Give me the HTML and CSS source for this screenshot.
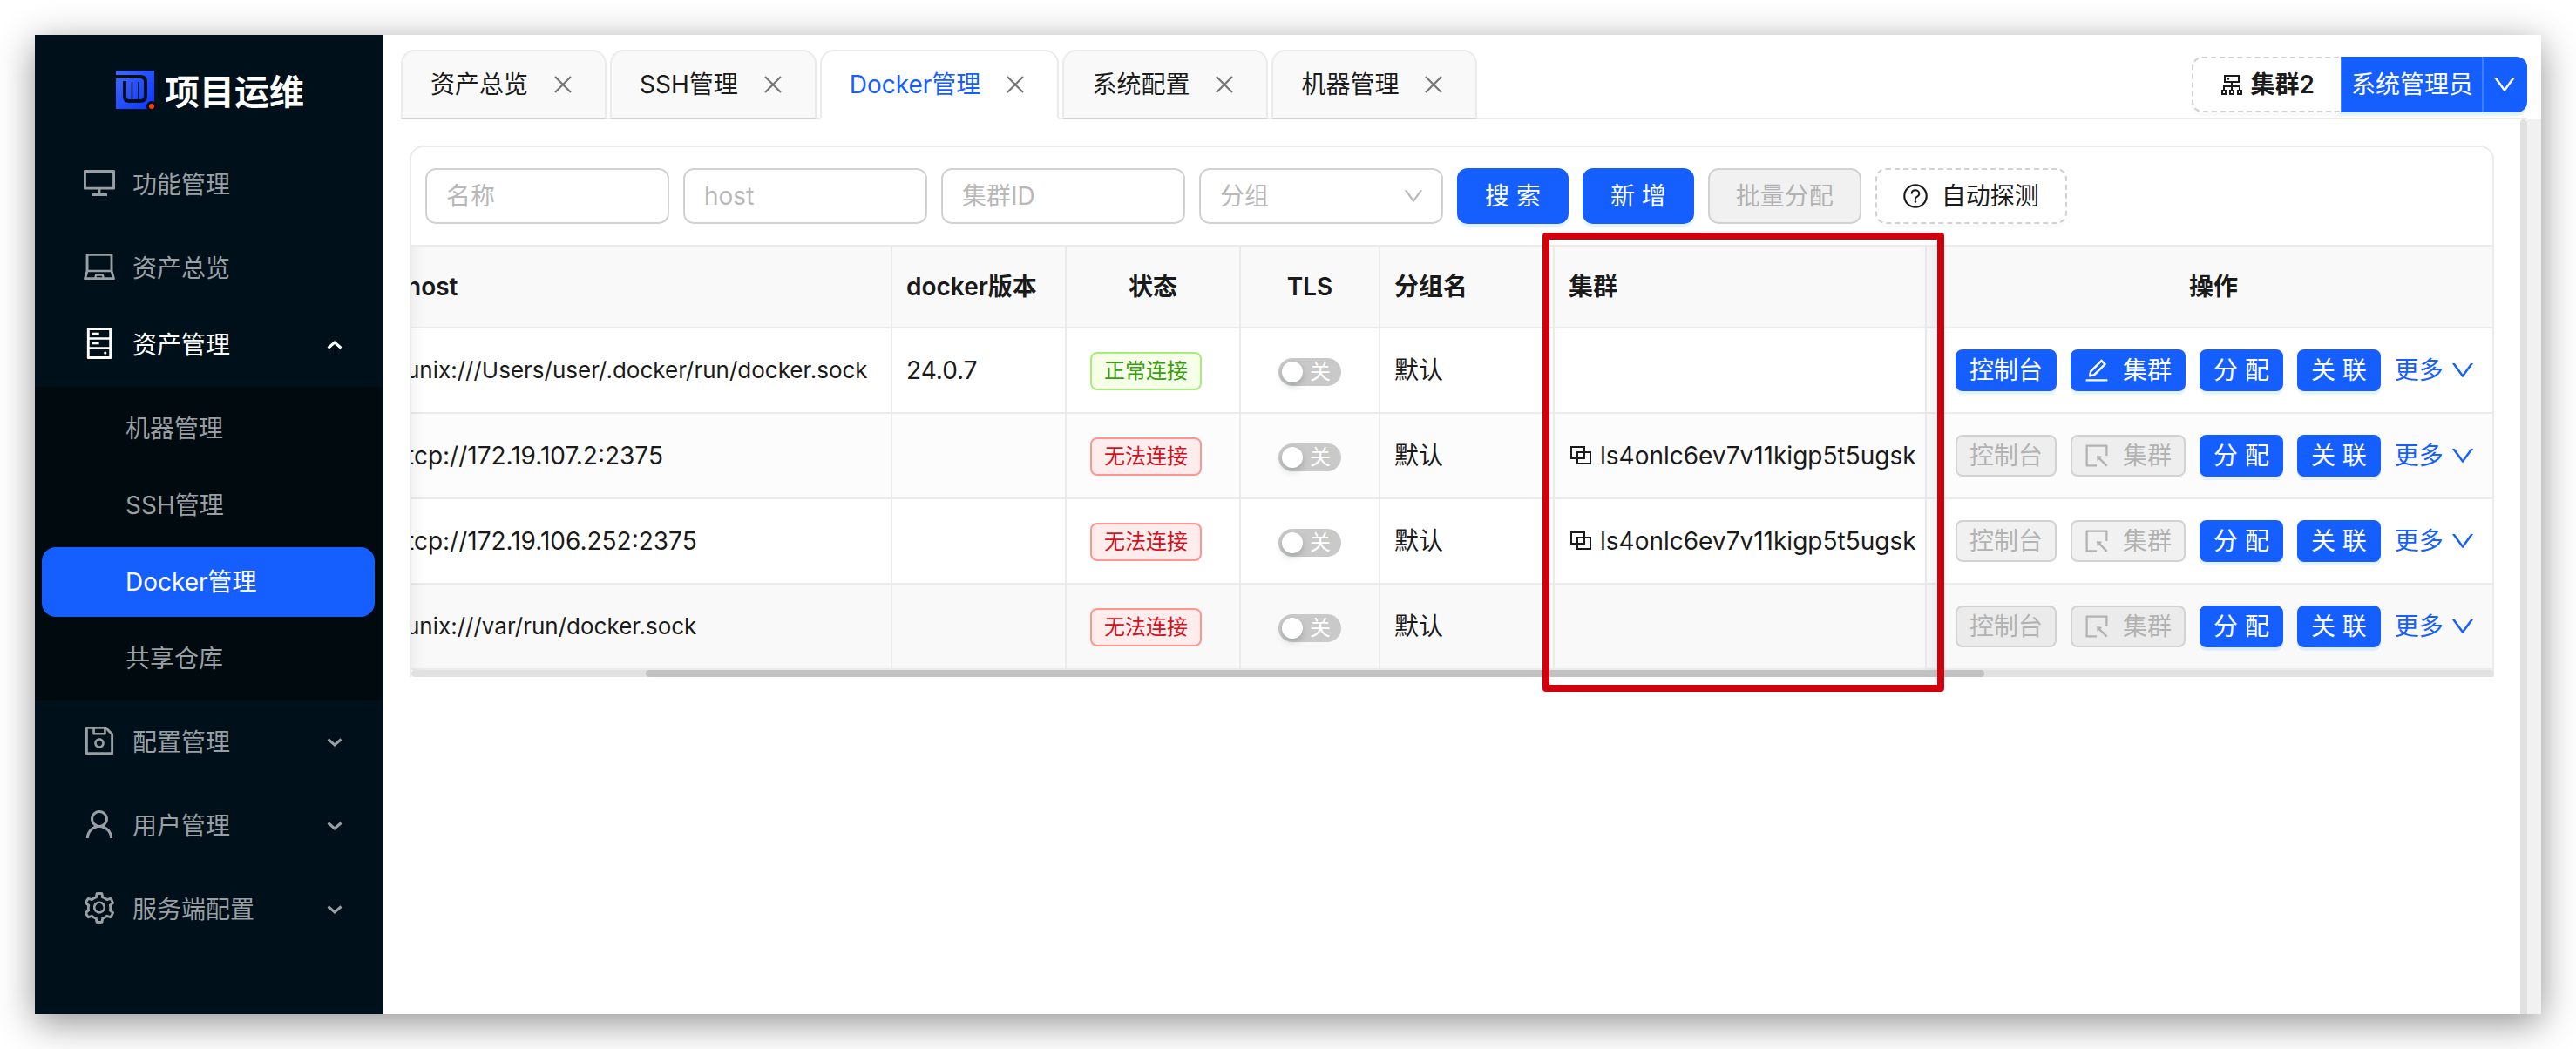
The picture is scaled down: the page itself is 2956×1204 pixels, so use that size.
FILE: index.html
```html
<!DOCTYPE html>
<html lang="zh-CN">
<head>
    <meta charset="UTF-8">
    <meta name="viewport" content="width=device-width, initial-scale=1.0">
    <title>项目运维 - Docker管理</title>
    <link rel="stylesheet" href="styles.css">
</head>
<body>
    <!-- 图标 -->
    <svg class="sprite" aria-hidden="true">
        <symbol id="i-desktop" viewBox="64 64 896 896"><path d="M928 140H96c-17.7 0-32 14.3-32 32v496c0 17.7 14.3 32 32 32h380v112H304c-8.8 0-16 7.2-16 16v48c0 4.4 3.6 8 8 8h432c4.4 0 8-3.6 8-8v-48c0-8.8-7.2-16-16-16H548V700h380c17.7 0 32-14.3 32-32V172c0-17.7-14.3-32-32-32zm-40 488H136V212h752v416z"/></symbol>
        <symbol id="i-laptop" viewBox="64 64 896 896"><path d="M956.9 845.1L896.4 632V168c0-17.7-14.3-32-32-32h-704c-17.7 0-32 14.3-32 32v464L67.9 845.1C60.4 866 75.8 888 98 888h828.8c22.2 0 37.6-22 30.1-42.9zM200.4 208h624v395h-624V208zm228.3 608l8.1-37h150.3l8.1 37H428.7zm224 0l-19.1-86.7c-.8-3.7-4.1-6.3-7.8-6.3H398.2c-3.8 0-7 2.6-7.8 6.3L371.3 816H151l42.3-149h638.2l42.3 149H652.7z"/></symbol>
        <symbol id="i-hdd" viewBox="64 64 896 896"><path d="M832 64H192c-17.7 0-32 14.3-32 32v832c0 17.7 14.3 32 32 32h640c17.7 0 32-14.3 32-32V96c0-17.7-14.3-32-32-32zm-600 72h560v208H232V136zm560 480H232V408h560v208zm0 272H232V680h560v208zM496 208H312c-4.4 0-8 3.6-8 8v48c0 4.4 3.6 8 8 8h184c4.4 0 8-3.6 8-8v-48c0-4.4-3.6-8-8-8zM312 544h184c4.4 0 8-3.6 8-8v-48c0-4.4-3.6-8-8-8H312c-4.4 0-8 3.6-8 8v48c0 4.4 3.6 8 8 8zm328 244a40 40 0 1080 0 40 40 0 10-80 0z"/></symbol>
        <symbol id="i-save" viewBox="64 64 896 896"><path d="M893.3 293.3L730.7 130.7c-7.5-7.5-16.7-13-26.7-16V112H144c-17.7 0-32 14.3-32 32v736c0 17.7 14.3 32 32 32h736c17.7 0 32-14.3 32-32V338.5c0-17-6.7-33.2-18.7-45.2zM384 184h256v104H384V184zm456 656H184V184h136v136c0 17.7 14.3 32 32 32h320c17.7 0 32-14.3 32-32V205.8l136 136V840zM512 442c-79.5 0-144 64.5-144 144s64.5 144 144 144 144-64.5 144-144-64.5-144-144-144zm0 224c-44.2 0-80-35.8-80-80s35.8-80 80-80 80 35.8 80 80-35.8 80-80 80z"/></symbol>
        <symbol id="i-user" viewBox="64 64 896 896"><path d="M858.5 763.6a374 374 0 00-80.6-119.5 375.63 375.63 0 00-119.5-80.6c-.4-.2-.8-.3-1.2-.5C719.5 518 760 444.7 760 362c0-137-111-248-248-248S264 225 264 362c0 82.7 40.5 156 102.8 201.1-.4.2-.8.3-1.2.5-44.8 18.9-85 46-119.5 80.6a375.63 375.63 0 00-80.6 119.5A371.7 371.7 0 00136 901.8a8 8 0 008 8.2h60c4.4 0 7.9-3.5 8-7.8 2-77.2 33-149.5 87.8-204.3 56.7-56.7 132-87.9 212.2-87.9s155.5 31.2 212.2 87.9C779 752.7 810 825 812 902.2c.1 4.4 3.6 7.8 8 7.8h60a8 8 0 008-8.2c-1-47.8-10.9-94.3-29.5-138.2zM512 534c-45.9 0-89.1-17.9-121.6-50.4S340 407.9 340 362c0-45.9 17.9-89.1 50.4-121.6S466.1 190 512 190s89.1 17.9 121.6 50.4S684 316.1 684 362c0 45.9-17.9 89.1-50.4 121.6S557.9 534 512 534z"/></symbol>
        <symbol id="i-setting" viewBox="64 64 896 896"><path d="M924.8 625.7l-65.5-56c3.1-19 4.7-38.4 4.7-57.8s-1.6-38.8-4.7-57.8l65.5-56a32.03 32.03 0 009.3-35.2l-.9-2.6a443.74 443.74 0 00-79.7-137.9l-1.8-2.1a32.12 32.12 0 00-35.1-9.5l-81.3 28.9c-30-24.6-63.5-44-99.7-57.6l-15.7-85a32.05 32.05 0 00-25.8-25.7l-2.7-.5c-52.1-9.4-106.9-9.4-159 0l-2.7.5a32.05 32.05 0 00-25.8 25.7l-15.8 85.4a351.86 351.86 0 00-99 57.4l-81.9-29.1a32 32 0 00-35.1 9.5l-1.8 2.1a446.02 446.02 0 00-79.7 137.9l-.9 2.6c-4.5 12.5-.8 26.5 9.3 35.2l66.3 56.6c-3.1 18.8-4.6 38-4.6 57.1 0 19.2 1.5 38.4 4.6 57.1L99 625.5a32.03 32.03 0 00-9.3 35.2l.9 2.6c18.1 50.4 44.9 96.9 79.7 137.9l1.8 2.1a32.12 32.12 0 0035.1 9.5l81.9-29.1c29.8 24.5 63.1 43.9 99 57.4l15.8 85.4a32.05 32.05 0 0025.8 25.7l2.7.5a449.4 449.4 0 00159 0l2.7-.5a32.05 32.05 0 0025.8-25.7l15.7-85a350 350 0 0099.7-57.6l81.3 28.9a32 32 0 0035.1-9.5l1.8-2.1c34.8-41.1 61.6-87.5 79.7-137.9l.9-2.6c4.5-12.3.8-26.3-9.3-35zM788.3 465.9c2.5 15.1 3.8 30.6 3.8 46.1s-1.3 31-3.8 46.1l-6.6 40.1 74.7 63.9a370.03 370.03 0 01-42.6 73.6L721 702.8l-31.4 25.8c-23.9 19.6-50.5 35-79.3 45.8l-38.1 14.3-17.9 97a377.5 377.5 0 01-85 0l-17.9-97.2-37.8-14.5c-28.5-10.8-55-26.2-78.7-45.7l-31.4-25.9-93.4 33.2c-17-22.9-31.2-47.6-42.6-73.6l75.5-64.5-6.5-40c-2.4-14.9-3.7-30.3-3.7-45.5 0-15.3 1.2-30.6 3.7-45.5l6.5-40-75.5-64.5c11.3-26.1 25.6-50.7 42.6-73.6l93.4 33.2 31.4-25.9c23.7-19.5 50.2-34.9 78.7-45.7l37.9-14.3 17.9-97.2c28.1-3.2 56.8-3.2 85 0l17.9 97 38.1 14.3c28.7 10.8 55.4 26.2 79.3 45.8l31.4 25.8 92.8-32.9c17 22.9 31.2 47.6 42.6 73.6L781.8 426l6.5 39.9zM512 326c-97.2 0-176 78.8-176 176s78.8 176 176 176 176-78.8 176-176-78.8-176-176-176zm79.2 255.2A111.6 111.6 0 01512 614c-29.9 0-58-11.7-79.2-32.8A111.6 111.6 0 01400 502c0-29.9 11.7-58 32.8-79.2C454 401.6 482.1 390 512 390c29.9 0 58 11.6 79.2 32.8A111.6 111.6 0 01624 502c0 29.9-11.7 58-32.8 79.2z"/></symbol>
        <symbol id="i-down" viewBox="64 64 896 896"><path d="M884 256h-75c-5.1 0-9.9 2.5-12.9 6.6L512 654.2 227.9 262.6c-3-4.1-7.8-6.6-12.9-6.6h-75c-6.5 0-10.3 7.4-6.5 12.7l352.6 486.1c12.8 17.6 39 17.6 51.7 0l352.6-486.1c3.9-5.3.1-12.7-6.4-12.7z"/></symbol>
        <symbol id="i-edit" viewBox="64 64 896 896"><path d="M257.7 752c2 0 4-.2 6-.5L431.9 722c2-.4 3.9-1.3 5.3-2.8l423.9-423.9a9.96 9.96 0 000-14.1L694.9 114.9c-1.9-1.9-4.4-2.9-7.1-2.9s-5.2 1-7.1 2.9L256.8 538.8c-1.5 1.5-2.4 3.3-2.8 5.3l-29.5 168.2a33.5 33.5 0 009.4 29.8c6.6 6.4 14.9 9.9 23.8 9.9zm67.4-174.4L687.8 215l73.3 73.3-362.7 362.6-88.9 15.7 15.6-89zM880 836H144c-17.7 0-32 14.3-32 32v36c0 4.4 3.6 8 8 8h784c4.4 0 8-3.6 8-8v-36c0-17.7-14.3-32-32-32z"/></symbol>
        <symbol id="i-select" viewBox="64 64 896 896"><path d="M880 112H144c-17.7 0-32 14.3-32 32v736c0 17.7 14.3 32 32 32h360c4.4 0 8-3.6 8-8v-56c0-4.4-3.6-8-8-8H184V184h656v320c0 4.4 3.6 8 8 8h56c4.4 0 8-3.6 8-8V144c0-17.7-14.3-32-32-32zM653.3 599.4l52.2-52.2a8.01 8.01 0 00-4.7-13.6l-179.4-21c-5.1-.6-9.5 3.7-8.9 8.9l21 179.4c.8 6.6 8.9 9.4 13.6 4.7l52.4-52.4 256.2 256.2c3.1 3.1 8.2 3.1 11.3 0l42.4-42.4c3.1-3.1 3.1-8.2 0-11.3L653.3 599.4z"/></symbol>
        <symbol id="i-chevron" viewBox="0 0 20 20"><path d="M2.500 6.500l7.500 6.500 7.500-6.500" fill="none" stroke="currentColor" stroke-width="3"/></symbol>
        <symbol id="i-close" viewBox="0 0 24 24"><path d="M3 3l18 18M21 3l-18 18" fill="none" stroke="currentColor" stroke-width="2.200"/></symbol>
        <symbol id="i-block" viewBox="0 0 28 28"><path d="M3 4h15v13H3zM10 10h15v13H10z" fill="none" stroke="currentColor" stroke-width="2"/></symbol>
        <symbol id="i-cluster" viewBox="0 0 28 28"><path d="M6 4h16v7H6zM14 11v10M5 21v-5h18v5M3 21h4v4H3zM12 21h4v4h-4zM21 21h4v4h-4z" fill="none" stroke="currentColor" stroke-width="2"/><circle cx="10" cy="7.500" r="1.200"/></symbol>
        <symbol id="i-question" viewBox="0 0 28 28"><circle cx="14" cy="14" r="12.700" fill="none" stroke="currentColor" stroke-width="2.200"/><path d="M9.700 11.500c0-2.600 1.900-4.200 4.300-4.200s4.300 1.600 4.300 3.900c0 1.900-1.200 2.900-2.600 3.600-1 .5-1.700 1.100-1.700 2.200v.8" fill="none" stroke="currentColor" stroke-width="2"/><circle cx="14" cy="20.500" r="1.300"/></symbol>
    </svg>

    <div class="app">
        <nav class="sidebar">
            <div class="logo">
                <svg class="logo-img" viewBox="0 0 44 44" aria-hidden="true">
                    <defs>
                        <linearGradient id="logo-bg" x1="0" y1="0" x2="1" y2="1">
                            <stop offset="0" stop-color="#3f68ff"/>
                            <stop offset="1" stop-color="#0a35ff"/>
                        </linearGradient>
                    </defs>
                    <path d="M0 0h44v44H0z" fill="url(#logo-bg)"/>
                    <path d="M0 7h28q6 0 6 6v16q0 6-6 6H15q-5 0-5-6V12" fill="none" stroke="#00101a" stroke-width="4"/>
                    <path d="M18.500 13v21M26 13v21" fill="none" stroke="#00101a" stroke-width="1.500"/>
                    <circle cx="41" cy="41" r="6" fill="#00101a"/>
                    <circle cx="41" cy="41" r="3" fill="#ff3b0a"/>
                </svg>
                <span class="logo-text">项目运维</span>
            </div>
            <ul class="menu">
                <li><a href="#"><svg class="menu-icon"><use href="#i-desktop"/></svg>功能管理</a></li>
                <li><a href="#"><svg class="menu-icon"><use href="#i-laptop"/></svg>资产总览</a></li>
                <li class="open">
                    <a href="#"><svg class="menu-icon"><use href="#i-hdd"/></svg>资产管理<svg class="arrow"><use href="#i-chevron"/></svg></a>
                    <ul class="submenu">
                        <li><a href="#">机器管理</a></li>
                        <li><a href="#">SSH管理</a></li>
                        <li><a href="#" class="selected">Docker管理</a></li>
                        <li><a href="#">共享仓库</a></li>
                    </ul>
                </li>
                <li><a href="#"><svg class="menu-icon"><use href="#i-save"/></svg>配置管理<svg class="arrow"><use href="#i-chevron"/></svg></a></li>
                <li><a href="#"><svg class="menu-icon"><use href="#i-user"/></svg>用户管理<svg class="arrow"><use href="#i-chevron"/></svg></a></li>
                <li><a href="#"><svg class="menu-icon"><use href="#i-setting"/></svg>服务端配置<svg class="arrow"><use href="#i-chevron"/></svg></a></li>
            </ul>
        </nav>

        <div class="main">
            <header class="header">
                <div class="tabs">
                    <div class="tab"><a href="#">资产总览</a><button type="button" aria-label="关闭"><svg><use href="#i-close"/></svg></button></div>
                    <div class="tab"><a href="#">SSH管理</a><button type="button" aria-label="关闭"><svg><use href="#i-close"/></svg></button></div>
                    <div class="tab active"><a href="#">Docker管理</a><button type="button" aria-label="关闭"><svg><use href="#i-close"/></svg></button></div>
                    <div class="tab"><a href="#">系统配置</a><button type="button" aria-label="关闭"><svg><use href="#i-close"/></svg></button></div>
                    <div class="tab"><a href="#">机器管理</a><button type="button" aria-label="关闭"><svg><use href="#i-close"/></svg></button></div>
                </div>
                <div class="user-group">
                    <button type="button" class="btn dashed cluster-btn"><svg class="icon"><use href="#i-cluster"/></svg>集群2</button>
                    <button type="button" class="btn primary user-btn">系统管理员</button>
                    <button type="button" class="btn primary more-btn" aria-label="展开"><svg class="icon"><use href="#i-down"/></svg></button>
                </div>
            </header>

            <div class="body">
                <div class="content">
                    <div class="card">
                        <form class="toolbar">
                            <input class="field" type="text" placeholder="名称" aria-label="名称">
                            <input class="field" type="text" placeholder="host" aria-label="host">
                            <input class="field" type="text" placeholder="集群ID" aria-label="集群ID">
                            <div class="select-box">
                                <select class="field" aria-label="分组">
                                    <option>分组</option>
                                </select>
                                <svg class="select-arrow"><use href="#i-down"/></svg>
                            </div>
                            <button type="button" class="btn primary">搜 索</button>
                            <button type="button" class="btn primary">新 增</button>
                            <button type="button" class="btn" disabled>批量分配</button>
                            <button type="button" class="btn dashed"><svg class="icon"><use href="#i-question"/></svg>自动探测</button>
                        </form>

                        <div class="table-wrap">
                            <table>
                                <colgroup>
                                    <col>
                                    <col class="w200">
                                    <col class="w200">
                                    <col class="w160">
                                    <col class="w200">
                                    <col class="col-cluster">
                                    <col class="col-rest">
                                    <col class="col-action">
                                </colgroup>
                                <thead>
                                    <tr>
                                        <th>host</th>
                                        <th>docker版本</th>
                                        <th class="center">状态</th>
                                        <th class="center">TLS</th>
                                        <th>分组名</th>
                                        <th>集群</th>
                                        <th class="rest"></th>
                                        <th class="fixed">操作</th>
                                    </tr>
                                </thead>
                                <tbody>
                                    <tr>
                                        <td class="sock">unix:///Users/user/.docker/run/docker.sock</td>
                                        <td>24.0.7</td>
                                        <td class="center"><span class="tag green">正常连接</span></td>
                                        <td class="center"><label class="switch"><input type="checkbox" disabled>关</label></td>
                                        <td>默认</td>
                                        <td></td>
                                        <td class="rest"></td>
                                        <td class="fixed">
                                            <div class="actions">
                                                <button type="button" class="btn small primary">控制台</button>
                                                <button type="button" class="btn small primary"><svg class="icon"><use href="#i-edit"/></svg>集群</button>
                                                <button type="button" class="btn small primary">分 配</button>
                                                <button type="button" class="btn small primary">关 联</button>
                                                <a href="#" class="more">更多<svg class="icon"><use href="#i-down"/></svg></a>
                                            </div>
                                        </td>
                                    </tr>
                                    <tr>
                                        <td>tcp://172.19.107.2:2375</td>
                                        <td></td>
                                        <td class="center"><span class="tag red">无法连接</span></td>
                                        <td class="center"><label class="switch"><input type="checkbox" disabled>关</label></td>
                                        <td>默认</td>
                                        <td><span class="cluster-id"><svg class="icon"><use href="#i-block"/></svg>ls4onlc6ev7v11kigp5t5ugsk</span></td>
                                        <td class="rest"></td>
                                        <td class="fixed">
                                            <div class="actions">
                                                <button type="button" class="btn small" disabled>控制台</button>
                                                <button type="button" class="btn small" disabled><svg class="icon"><use href="#i-select"/></svg>集群</button>
                                                <button type="button" class="btn small primary">分 配</button>
                                                <button type="button" class="btn small primary">关 联</button>
                                                <a href="#" class="more">更多<svg class="icon"><use href="#i-down"/></svg></a>
                                            </div>
                                        </td>
                                    </tr>
                                    <tr>
                                        <td>tcp://172.19.106.252:2375</td>
                                        <td></td>
                                        <td class="center"><span class="tag red">无法连接</span></td>
                                        <td class="center"><label class="switch"><input type="checkbox" disabled>关</label></td>
                                        <td>默认</td>
                                        <td><span class="cluster-id"><svg class="icon"><use href="#i-block"/></svg>ls4onlc6ev7v11kigp5t5ugsk</span></td>
                                        <td class="rest"></td>
                                        <td class="fixed">
                                            <div class="actions">
                                                <button type="button" class="btn small" disabled>控制台</button>
                                                <button type="button" class="btn small" disabled><svg class="icon"><use href="#i-select"/></svg>集群</button>
                                                <button type="button" class="btn small primary">分 配</button>
                                                <button type="button" class="btn small primary">关 联</button>
                                                <a href="#" class="more">更多<svg class="icon"><use href="#i-down"/></svg></a>
                                            </div>
                                        </td>
                                    </tr>
                                    <tr class="hover">
                                        <td class="sock">unix:///var/run/docker.sock</td>
                                        <td></td>
                                        <td class="center"><span class="tag red">无法连接</span></td>
                                        <td class="center"><label class="switch"><input type="checkbox" disabled>关</label></td>
                                        <td>默认</td>
                                        <td></td>
                                        <td class="rest"></td>
                                        <td class="fixed">
                                            <div class="actions">
                                                <button type="button" class="btn small" disabled>控制台</button>
                                                <button type="button" class="btn small" disabled><svg class="icon"><use href="#i-select"/></svg>集群</button>
                                                <button type="button" class="btn small primary">分 配</button>
                                                <button type="button" class="btn small primary">关 联</button>
                                                <a href="#" class="more">更多<svg class="icon"><use href="#i-down"/></svg></a>
                                            </div>
                                        </td>
                                    </tr>
                                </tbody>
                            </table>
                        </div>
                        <div class="scroll-x"><div class="thumb"></div></div>
                        <div class="mark"></div>
                    </div>
                </div>
                <div class="scroll-y"></div>
                <div class="gutter"></div>
            </div>
        </div>
    </div>
</body>
</html>
```

FILE: styles.css
```css
*{
    box-sizing: border-box;
}
body{
    margin: 0;
    padding: 40px;
    min-height: 100vh;
    display: flex;
    background: #fff;
    color: #1a1a1a;
    font-family: Inter, "Noto Sans CJK SC", sans-serif;
    font-size: 28px;
    line-height: 44px;
}
ul{
    margin: 0;
    padding: 0;
    list-style: none;
}
a{
    color: inherit;
    text-decoration: none;
}
button, input, select{
    font: inherit;
    color: inherit;
}
svg{
    fill: currentColor;
    flex: none;
}
.sprite{
    display: none;
}
.icon{
    width: 28px;
    height: 28px;
}
.app{
    flex: 1;
    min-width: 0;
    display: flex;
    background: #fff;
    box-shadow: 0 10px 40px rgba(0, 0, 0, 0.43);
}

/*左侧菜单*/
.sidebar{
    flex: none;
    width: 400px;
    background: #00101a;
    border-right: 2px solid #00101a;
    color: #999fa3;
}
.logo{
    display: flex;
    align-items: center;
    justify-content: center;
    gap: 12px;
    height: 126px;
    padding-left: 4px;
}
.logo-img{
    width: 44px;
    height: 44px;
}
.logo-text{
    padding-top: 6px;
    color: #fff;
    font-size: 40px;
    font-weight: 600;
}
.menu a{
    display: flex;
    align-items: center;
    height: 80px;
    margin: 8px;
    padding: 0 36px 0 48px;
    border-radius: 16px;
}
.menu > li > a{
    margin: 0 8px 16px;
}
.menu > li:first-child{
    padding-top: 6px;
}
.menu > .open > a{
    margin: -8px 8px 8px;
}
.menu-icon{
    width: 36px;
    height: 36px;
    margin: 0 20px 4px 0;
}
.arrow{
    width: 20px;
    height: 20px;
    margin-left: auto;
}
.open > a{
    color: #fff;
}
.open .arrow{
    transform: rotate(180deg);
}
.submenu{
    padding: 8px 0;
    margin-bottom: 8px;
    background: #000a0f;
}
.submenu a{
    margin: 0 8px 8px;
    padding-left: 96px;
}
.submenu li:last-child a{
    margin-bottom: 0;
}
.submenu .selected{
    background: #155eff;
    color: #fff;
}

/*顶部标签页*/
.main{
    flex: 1;
    min-width: 0;
    display: flex;
    flex-direction: column;
}
.header{
    display: flex;
    justify-content: space-between;
    align-items: flex-end;
    margin: 0 16px 0 20px;
    padding-top: 17px;
    box-shadow: inset 0 -2px #ebebeb;
}
.tabs{
    display: flex;
    gap: 4px;
}
.tab{
    display: flex;
    align-items: center;
    height: 80px;
    padding: 0 36px 0 32px;
    border: 2px solid #ebebeb;
    border-bottom-color: #d2d2d2;
    border-radius: 16px 16px 0 0;
    background: #f9f9f9;
}
.tab.active{
    background: #fff;
    border-bottom-color: #fff;
}
.tab.active a{
    color: #155eff;
}
.tab button{
    display: flex;
    margin-left: 28px;
    padding: 0;
    border: 0;
    background: none;
    color: #757575;
    cursor: pointer;
}
.tab svg{
    width: 24px;
    height: 24px;
}
.user-group{
    display: flex;
    margin-bottom: 8px;
}

/*按钮*/
.btn{
    display: flex;
    align-items: center;
    justify-content: center;
    gap: 16px;
    height: 64px;
    padding: 0 30px;
    border: 2px solid #d2d2d2;
    border-radius: 12px;
    background: #fff;
    white-space: nowrap;
    cursor: pointer;
}
.btn.small{
    height: 48px;
    padding: 0 14px;
    border-radius: 8px;
}
.btn.primary{
    border-color: #155eff;
    background: #155eff;
    color: #fff;
    box-shadow: 0 4px 0 rgba(5, 145, 255, 0.1);
}
.btn.dashed{
    border-style: dashed;
    box-shadow: 0 4px 0 rgba(0, 0, 0, 0.02);
}
.btn:disabled{
    background: rgba(0, 0, 0, 0.055);
    color: #b2b2b2;
    cursor: not-allowed;
}
.user-group .cluster-btn{
    gap: 8px;
    border-right: 0;
    border-radius: 12px 0 0 12px;
    font-weight: 600;
}
.user-group .user-btn{
    padding: 0 10px;
    border-left-color: #3f7fff;
    border-right: 0;
    border-radius: 0;
}
.user-group .more-btn{
    padding: 0 10px;
    border-left-color: #3f7fff;
    border-radius: 0 12px 12px 0;
}

/*内容区*/
.body{
    flex: 1;
    display: flex;
}
.content{
    flex: 1;
    min-width: 0;
    padding: 30px;
}
.scroll-y{
    width: 8px;
    border-radius: 4px 4px 0 0;
    background: #e1e1e1;
}
.gutter{
    width: 16px;
    background: #f1f1f1;
}
.card{
    position: relative;
    border: 2px solid #ebebeb;
    border-bottom: 0;
    border-radius: 16px 16px 0 0;
}
.toolbar{
    display: flex;
    gap: 16px;
    padding: 24px 16px;
    border-bottom: 2px solid #ebebeb;
}
.field{
    width: 280px;
    height: 64px;
    padding: 0 22px;
    border: 2px solid #d2d2d2;
    border-radius: 12px;
    background: #fff;
    outline: none;
}
.field::placeholder{
    color: #b8b8b8;
    opacity: 1;
}
.select-box{
    position: relative;
}
.select-box .field{
    display: block;
    appearance: none;
    color: #b8b8b8;
}
.select-arrow{
    position: absolute;
    top: 20px;
    right: 22px;
    width: 24px;
    height: 24px;
    color: #b8b8b8;
    pointer-events: none;
}

/*表格，横向滚动后左侧被遮住一部分*/
.table-wrap{
    position: relative;
    display: flex;
    justify-content: flex-end;
    overflow: hidden;
}
.table-wrap::before{
    content: "";
    position: absolute;
    top: 0;
    bottom: 0;
    left: 0;
    width: 60px;
    box-shadow: inset 20px 0 16px -16px rgba(5, 5, 5, 0.06);
    pointer-events: none;
}
table{
    flex: none;
    width: calc(100% + 22px);
    table-layout: fixed;
    border-collapse: separate;
    border-spacing: 0;
}
.w200{
    width: 200px;
}
.w160{
    width: 160px;
}
.col-cluster{
    width: 427px;
}
.col-rest{
    width: 9px;
}
.col-action{
    width: 640px;
}
th, td{
    height: 98px;
    padding: 0 16px;
    border-right: 2px solid #ebebeb;
    border-bottom: 2px solid #ebebeb;
    text-align: left;
    white-space: nowrap;
}
th{
    height: 94px;
    background: #f9f9f9;
    font-weight: 600;
}
tbody tr:nth-child(even){
    background: #fcfcfc;
}
tbody tr.hover{
    background: #f9f9f9;
}
.center{
    text-align: center;
}
.sock{
    font-size: 26px;
}
.rest{
    padding: 0;
    border-right: 0;
}
.fixed{
    position: relative;
    border-right: 0;
    text-align: center;
}
.fixed::before{
    content: "";
    position: absolute;
    top: 0;
    bottom: -2px;
    left: -60px;
    width: 60px;
    box-shadow: inset -20px 0 16px -16px rgba(5, 5, 5, 0.06);
    pointer-events: none;
}
.tag{
    display: inline-block;
    margin-right: 16px;
    padding: 0 14px;
    border: 2px solid;
    border-radius: 8px;
    font-size: 24px;
    line-height: 40px;
    vertical-align: middle;
}
.tag.green{
    color: #389e0d;
    background: #f6ffe8;
    border-color: #a8ec7c;
}
.tag.red{
    color: #cf1322;
    background: #ffeded;
    border-color: #ff9490;
}
.switch{
    display: inline-flex;
    align-items: center;
    gap: 8px;
    width: 72px;
    height: 32px;
    padding: 0 4px;
    border-radius: 16px;
    background: #c9c9c9;
    color: #fff;
    font-size: 24px;
    line-height: 32px;
    vertical-align: middle;
}
.switch input{
    appearance: none;
    width: 24px;
    height: 24px;
    margin: 0;
    border-radius: 50%;
    background: #fff;
    box-shadow: 0 4px 8px rgba(0, 35, 11, 0.2);
}
.cluster-id{
    display: flex;
    align-items: center;
    gap: 8px;
}
.actions{
    display: flex;
    align-items: center;
    gap: 16px;
    padding-left: 8px;
}
.more{
    display: flex;
    align-items: center;
    gap: 8px;
    color: #155eff;
}
.scroll-x{
    display: flex;
    margin-right: -2px;
    border-radius: 4px;
    background: #e1e1e1;
}
.thumb{
    flex: 1;
    height: 8px;
    margin: 0 585px 0 269px;
    border-radius: 4px;
    background: #c1c1c1;
}
/*集群列的红框标注*/
.mark{
    position: absolute;
    top: 98px;
    right: 629px;
    width: 461px;
    height: 527px;
    border: 8px solid #d0000d;
    border-radius: 4px;
    pointer-events: none;
}
```
